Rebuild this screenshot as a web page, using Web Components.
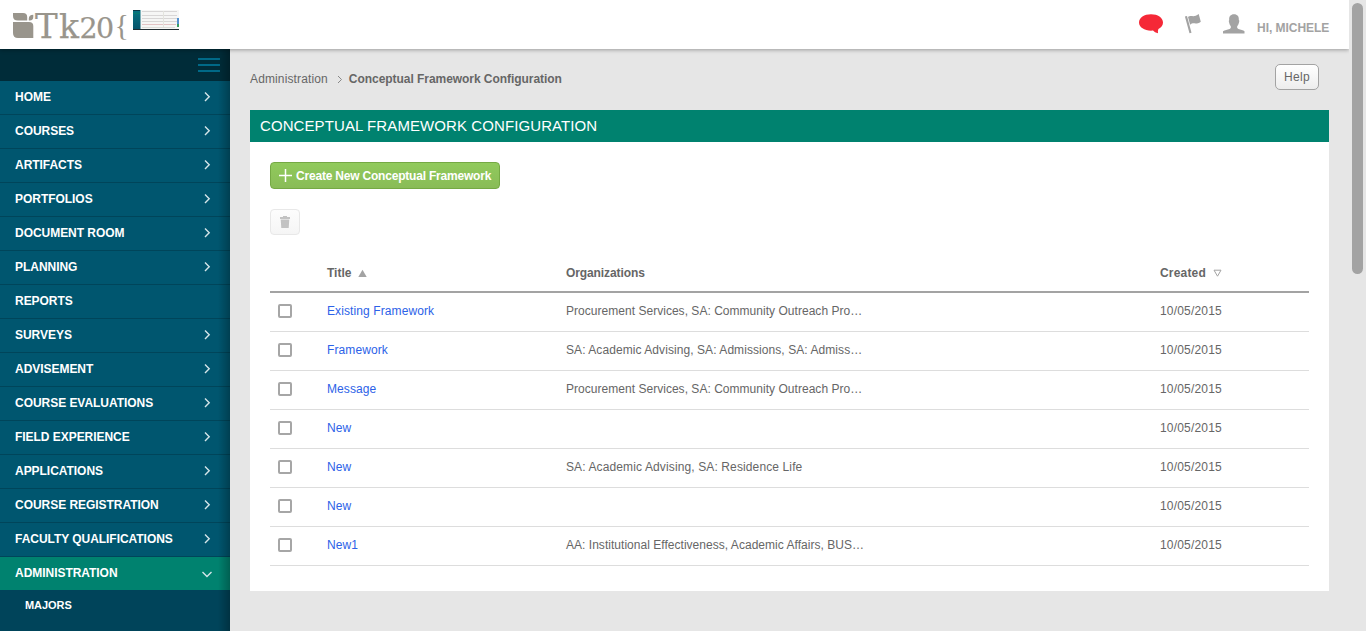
<!DOCTYPE html>
<html lang="en"><head><meta charset="utf-8"><title>Conceptual Framework Configuration</title>
<style>
html,body{margin:0;height:100%;overflow:hidden}
body{font:12px/16px "Liberation Sans",Arial,sans-serif;color:#666;background:#e6e6e6}
</style></head><body>
<tk-app></tk-app>
<script>
const define=(name,html,setup)=>customElements.define(name,class extends HTMLElement{
  connectedCallback(){
    if(this.shadowRoot)return;
    const t=document.createElement('template');
    t.innerHTML=html;
    this.attachShadow({mode:'open'}).append(t.content.cloneNode(true));
    if(setup)setup(this,this.shadowRoot);
  }
});

define('tk-logo',`<style>:host{display:block;width:180px;height:49px}svg{display:block}</style>
<svg width="180" height="49" fill="#99958c">
<defs><linearGradient id="side" x2="0" y2="1"><stop stop-color="#087483"/><stop offset="1" stop-color="#07546b"/></linearGradient></defs>
<path d="M13 13H23Q27.200 13 27.200 17V20.500H18Q13 20.500 13 16ZM28.800 20.500V18.500Q28.800 14.700 33.300 14.700V16.700Q33.300 20.500 29.800 20.500ZM13 22H29Q33.300 22 33.300 26V38H18Q13 38 13 33Z"/>
<text y="38" font-family="DejaVu Serif,serif" stroke="#99958c" stroke-width=".25"><tspan x="35" font-size="34">T</tspan><tspan x="59" font-size="33">k</tspan><tspan x="79.5" font-size="28.5">2</tspan><tspan x="96" font-size="28.5">0</tspan><tspan x="114.500" y="34.700" font-size="30" stroke="none" font-family="Liberation Serif">{</tspan></text>
<path fill="#f6f6f5" d="M133 10H179V29H133Z"/><path fill="url(#side)" d="M133 10H140.500V29H133Z"/><path fill="#0d3646" d="M133 10H140V11H133Z"/>
<path fill="#087b70" d="M133 13H140V14H133Z"/>
<path stroke="#d8d6d6" fill="none" d="M142 11.500H177M142 15.500H177M142 18.500H177M142 21.500H177"/><path stroke="#e3c3c4" fill="none" d="M142 24.500H176"/><path stroke="#dddcd8" fill="none" d="M142 27.500H175"/><path stroke="#e4e4de" fill="none" d="M163.500 11V27"/>
<path fill="#5592d0" d="M177 18H179V24H177Z"/><path fill="#3b9f65" d="M177 24H179V27H177Z"/><path fill="#202c31" d="M133 29H179V30H133Z"/></svg>`);

define('tk-header',`<style>:host{display:flex;justify-content:space-between;height:49px;background:#fff;box-shadow:0 1px 4px #0005;position:relative;z-index:2;width:1349px}
.user{display:flex;margin-right:20px}svg{display:block}.hi{font-weight:bold;color:#a3a3a3;line-height:16px;margin-top:20px;width:72px;white-space:nowrap;letter-spacing:-.04px}</style>
<tk-logo></tk-logo><div class="user"><svg width="119" height="49" viewBox="1138 0 119 49" fill="#a3a3a3">
<path fill="#f52837" d="M1151 14.300C1157.800 14.300 1163 17.700 1163 22.500C1163 25.200 1161.300 27.600 1158.400 29.100Q1157.500 31.500 1158 33.200Q1154.600 32.900 1153 30.600C1145.500 31.300 1139 27.800 1139 22.600C1139 17.700 1144.200 14.300 1151 14.300Z"/>
<path d="M1184.900 16.600L1187 16L1191.500 32.700L1189.500 33.200ZM1188 17C1191 14.400 1193.500 18.300 1198.700 14L1200.800 21.700C1196 25.200 1193.200 21.700 1190.100 24.700Z"/>
<path d="M1234 14.200C1237.400 14.200 1239.100 16.400 1238.800 19.900Q1239.800 20.200 1239 22.500Q1238.600 24.500 1237.200 26.300V28.100Q1237.800 29.100 1241 29.700Q1244 30.500 1244.500 31.200V33.500H1223V31.200Q1224 30.400 1227 29.700Q1230.400 29.100 1230.800 28.100V26.300Q1229.400 24.500 1229.100 22.500Q1228.400 20.400 1229.200 19.900C1228.900 16.400 1230.600 14.200 1234 14.200Z"/></svg><span class="hi">HI, MICHELE</span></div>`);

define('tk-item',`<style>:host{display:flex;justify-content:space-between;align-items:center;box-sizing:border-box;height:34px;padding:0 18px 2px 15px;border-bottom:1px solid #00455a;color:#fff;font-weight:bold;font-size:12px;letter-spacing:-.04px;background:#00566f}
:host([active]){background:#00826f;height:33px;border:0;padding-bottom:1px}:host([sub]){background:none;border:0;padding-left:25px;height:30px;font-size:11px;padding-bottom:0}
svg{fill:none;stroke:#d4e5e9;stroke-width:1.4}span{white-space:nowrap}</style><span><slot></slot></span><svg width="11" height="11"><path/></svg>`,
(e,r)=>{r.querySelector('path').setAttribute('d',e.hasAttribute('active')?'M1.500 4L6 8.500L10.500 4':e.hasAttribute('plain')?'':'M4 1.500L8.200 5.700L4 10')});

define('tk-sidebar',`<style>:host{display:block;width:230px;height:582px;background:#00445a;position:relative}
:host::after{content:"";position:absolute;right:0;top:0;bottom:0;width:12px;background:linear-gradient(90deg,#0000,#0004)}
.bar{height:32px;background:#002c39;display:flex;justify-content:flex-end;align-items:center;padding-right:10px;box-sizing:border-box}svg{stroke:#006987;stroke-width:2}</style>
<div class="bar"><svg width="22" height="16"><path d="M0 2H22M0 8H22M0 14H22"/></svg></div><nav></nav>`,(e,r)=>{
 const n=r.querySelector('nav');
 ['HOME','COURSES','ARTIFACTS','PORTFOLIOS','DOCUMENT ROOM','PLANNING','REPORTS','SURVEYS','ADVISEMENT','COURSE EVALUATIONS','FIELD EXPERIENCE','APPLICATIONS','COURSE REGISTRATION','FACULTY QUALIFICATIONS','ADMINISTRATION','MAJORS'].forEach(t=>{
 const i=document.createElement('tk-item');i.textContent=t;
 if(t==='REPORTS')i.setAttribute('plain','');
 if(t==='ADMINISTRATION')i.setAttribute('active','');
 if(t==='MAJORS'){i.setAttribute('sub','');i.setAttribute('plain','')}
 n.append(i)})});

define('tk-breadcrumb',`<style>:host{display:flex;justify-content:space-between;height:61px;color:#666}.path{display:flex;padding-top:22px;height:16px;letter-spacing:.13px;white-space:nowrap}svg{margin:3px 6px 0 8px;fill:none;stroke:#888}b{letter-spacing:-.05px}
button{font:12px/16px "Liberation Sans",Arial,sans-serif;letter-spacing:.3px;color:#666;width:44px;height:26px;border:1px solid #a3a3a3;border-radius:5px;background:linear-gradient(#fff,#ededed);padding:0;margin:15px 10px 0 0}</style>
<div class="path"><span>Administration</span><svg width="7" height="11"><path d="M2 2L5.500 5.500L2 9"/></svg><b>Conceptual Framework Configuration</b></div><button>Help</button>`);

define('tk-create',`<style>:host{display:block}button{display:flex;align-items:center;width:230px;height:27px;border:1px solid #75a944;border-radius:4px;background:linear-gradient(#91ca5c,#89bc57);color:#fff;font:bold 12px/16px "Liberation Sans",Arial,sans-serif;letter-spacing:-.2px;padding:0 0 0 8px;white-space:nowrap}svg{stroke:#fff;stroke-width:1.5;margin-right:4px}</style><button><svg width="13" height="13"><path d="M6.500 0V13M0 6.500H13"/></svg><slot></slot></button>`);
define('tk-delete',`<style>:host{display:block}button{display:flex;align-items:center;justify-content:center;padding:0;width:30px;height:26px;border:1px solid #e8e8e8;border-radius:4px;background:linear-gradient(#fdfdfd,#f5f5f5)}</style><button aria-label="Delete"><svg width="12" height="14" fill="#c2c2c2"><path d="M1 2H4V1H8V2H11V4H1ZM1.700 4.500H10.300L9.700 13H2.300Z"/></svg></button>`);

define('tk-row',`<style>:host{display:grid;grid-template-columns:57px 239px 594px 149px;height:38px;border-bottom:1px solid #ddd;line-height:16px;letter-spacing:.1px}
:host>*{margin-top:10px;white-space:nowrap}.box{box-sizing:border-box;width:14px;height:14px;border:2px solid #a6a6a6;border-radius:2px;margin:11px 0 0 8px}.title{color:#2c62e8}.orgs{letter-spacing:var(--track,.03px)}.date{letter-spacing:.18px}</style>
<i class="box"></i><span class="title"><slot name="title"></slot></span><span class="orgs"><slot name="orgs"></slot></span><span class="date"><slot name="date"></slot></span>`);

define('tk-table',`<style>:host{display:block}.head{display:grid;grid-template-columns:57px 239px 594px 149px;height:36px;border-bottom:2px solid #a3a3a3;font-weight:bold}.head span{padding-top:10px;white-space:nowrap}.org{letter-spacing:-.1px}.created{letter-spacing:.18px}svg{margin-left:7px}tk-row:nth-child(2){--track:.07px}tk-row:nth-child(5){--track:.12px}</style>
<div class="head"><span></span><span>Title<svg width="9" height="8"><path fill="#a3a3a3" d="M.300 8L4.500 .700L8.700 8Z"/></svg></span><span class="org">Organizations</span><span class="created">Created<svg width="9" height="8"><path fill="none" stroke="#a3a3a3" d="M1 1.200H8L4.500 7.200Z"/></svg></span></div><div id="rows"></div>`,(e,r)=>{
 [['Existing Framework','Procurement Services, SA: Community Outreach Pro…'],['Framework','SA: Academic Advising, SA: Admissions, SA: Admiss…'],['Message','Procurement Services, SA: Community Outreach Pro…'],['New',''],['New','SA: Academic Advising, SA: Residence Life'],['New',''],['New1','AA: Institutional Effectiveness, Academic Affairs, BUS…']].forEach(d=>{
 const x=document.createElement('tk-row');
 [['title',d[0]],['orgs',d[1]],['date','10/05/2015']].forEach(([k,v])=>{const s=document.createElement('span');s.slot=k;s.textContent=v;x.append(s)});
 r.getElementById('rows').append(x)})});

define('tk-panel',`<style>:host{display:block;width:1079px;height:481px;background:#fff}h1{margin:0;background:#00826f;color:#fff;font:15px/32px "Liberation Sans",Arial,sans-serif;letter-spacing:.09px;padding-left:10px;height:32px}.body{padding:20px}</style><h1>CONCEPTUAL FRAMEWORK CONFIGURATION</h1><div class="body"><slot></slot></div>`);

define('tk-scrollbar',`<style>:host{display:block;width:17px;height:631px;background:#e6e6e6;position:relative;z-index:3;padding-top:3px;box-sizing:border-box}div{width:11px;height:271px;margin:0 3px;border-radius:6px;background:#a3a3a3}</style><div></div>`);

define('tk-app',`<style>:host{display:flex;width:1366px;height:631px;overflow:hidden}.main{width:1349px}.work{display:flex}.content{width:1079px;padding-left:20px}tk-create{margin-bottom:20px}tk-delete{margin-bottom:20px}</style>
<div class="main"><tk-header></tk-header><div class="work"><tk-sidebar></tk-sidebar><div class="content"><tk-breadcrumb></tk-breadcrumb><tk-panel><tk-create>Create New Conceptual Framework</tk-create><tk-delete></tk-delete><tk-table></tk-table></tk-panel></div></div></div><tk-scrollbar></tk-scrollbar>`);
</script></body></html>
